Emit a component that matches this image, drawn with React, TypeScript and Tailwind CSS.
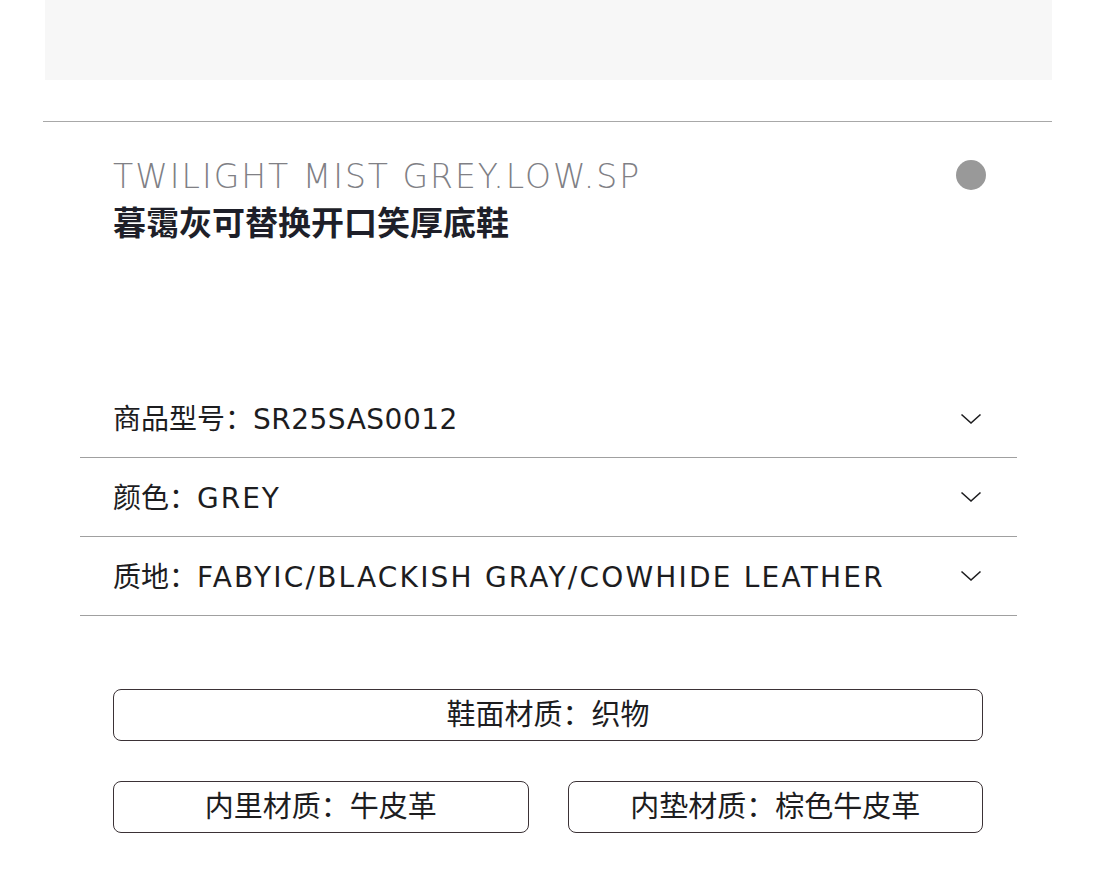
import React from "react";

const latin = "font-['DejaVu_Sans','Noto_Sans_CJK_SC',sans-serif]";
const cjk = "font-['Noto_Sans_CJK_SC',sans-serif]";

const specs = [
  { label: "商品型号：", value: "SR25SAS0012", track: "tracking-[0.5px]", h: "h-[78px]" },
  { label: "颜色：", value: "GREY", track: "tracking-[2px]", h: "h-[79px]" },
  { label: "质地：", value: "FABYIC/BLACKISH GRAY/COWHIDE LEATHER", track: "tracking-[2.2px]", h: "h-[79px]" },
];

const Chevron = () => (
  <svg width="22" height="12" viewBox="0 0 22 12" fill="none" className="shrink-0">
    <polyline points="1.5,1.5 11,10 20.5,1.5" stroke="#1d1d1f" strokeWidth="1.6" />
  </svg>
);

const App: React.FC = () => {
  return (
    <div className="w-[1097px] min-h-[891px] bg-white text-[#1d1d1f]">
      {/* imagen del producto, cortada arriba */}
      <div className="ml-[45px] w-[1007px] h-[80px] bg-[#f7f7f7]" />
      <div className="ml-[43px] w-[1009px] mt-[41px] h-px bg-[#a8a8a8]" />

      {/* cabecera */}
      <div className="flex justify-between items-start pl-[113px] pr-[111px] mt-[38px]">
        <div>
          <div className={`${latin} text-[33px] leading-[34px] tracking-[2px] font-extralight text-[#808085] whitespace-nowrap`}>
            TWILIGHT MIST GREY.LOW.SP
          </div>
          <h1 className={`${cjk} mt-[7px] text-[33px] leading-[40px] font-bold text-[#1e1f29]`}>
            暮霭灰可替换开口笑厚底鞋
          </h1>
        </div>
        <div className="w-[30px] h-[30px] rounded-full bg-[#999999]" />
      </div>

      {/* especificaciones */}
      <div className="mx-[80px] mt-[139px]">
        {specs.map((s) => (
          <div
            key={s.label}
            className={`flex items-center justify-between ${s.h} pl-[33px] pr-[35px] border-b border-[#a0a0a0]`}
          >
            <div className="flex items-baseline whitespace-nowrap">
              <span className={`${cjk} text-[28px]`}>{s.label}</span>
              <span className={`${latin} text-[28px] ${s.track}`}>{s.value}</span>
            </div>
            <Chevron />
          </div>
        ))}
      </div>

      {/* materiales */}
      <div className="mx-[113px] w-[870px] mt-[73px] pb-[59px] flex flex-col gap-[40px]">
        <div className={`${cjk} h-[52px] pb-[4px] rounded-[8px] border border-[#3b3236] flex items-center justify-center text-[29px]`}>
          鞋面材质：织物
        </div>
        <div className="grid grid-cols-2 gap-[39px]">
          <div className={`${cjk} h-[52px] pb-[4px] rounded-[8px] border border-[#3b3236] flex items-center justify-center text-[29px]`}>
            内里材质：牛皮革
          </div>
          <div className={`${cjk} h-[52px] pb-[4px] rounded-[8px] border border-[#3b3236] flex items-center justify-center text-[29px]`}>
            内垫材质：棕色牛皮革
          </div>
        </div>
      </div>
    </div>
  );
};

export default App;
